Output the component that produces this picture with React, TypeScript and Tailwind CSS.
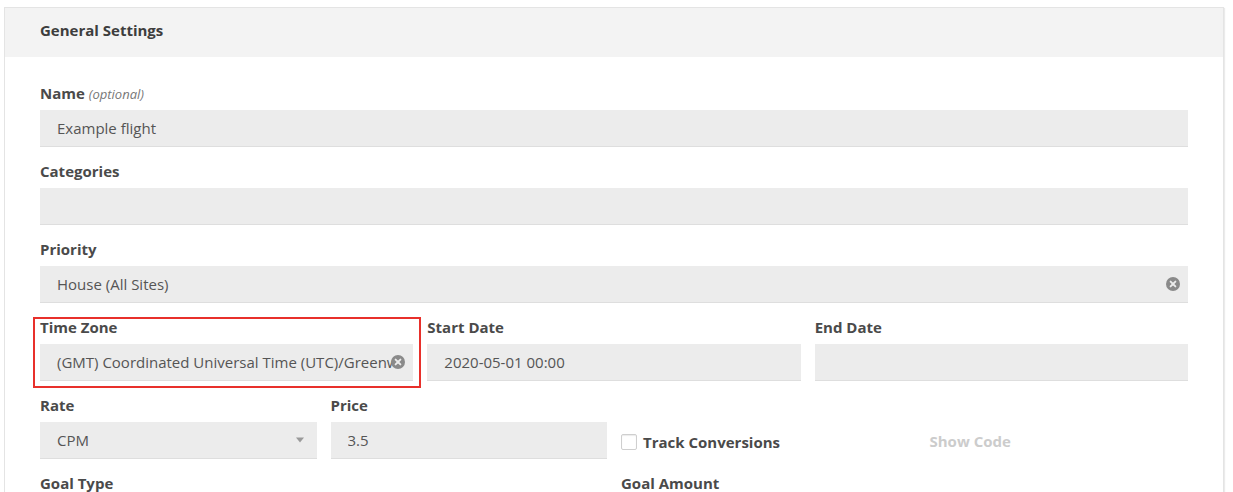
import React from "react";

const ClearIcon = () => (
  <svg width="14" height="14" viewBox="0 0 14 14" className="shrink-0">
    <circle cx="7" cy="7" r="7" fill="#8a8a8a" />
    <path d="M4.6 4.6 L9.4 9.4 M9.4 4.6 L4.6 9.4" stroke="#ececec" strokeWidth="1.9" strokeLinecap="round" />
  </svg>
);

const Label = ({ children }: { children: React.ReactNode }) => (
  <div className="h-5 leading-[18px] text-[15px] font-bold text-[#4a4a4a] mb-[6px] whitespace-nowrap">{children}</div>
);

const Input = ({ value, clear, caret }: { value?: string; clear?: boolean; caret?: boolean }) => (
  <div className="relative flex items-center h-[37px] bg-[#ececec] border-b border-[#dedede] pl-[17px] pr-[20px] text-[15px] text-[#555]">
    <span className="flex-1 overflow-hidden whitespace-nowrap">{value}</span>
    {clear && (
      <span className="absolute right-[8px] top-1/2 -translate-y-1/2 flex">
        <ClearIcon />
      </span>
    )}
    {caret && (
      <span className="absolute right-[13px] top-1/2 -translate-y-1/2 w-0 h-0 border-l-[4px] border-r-[4px] border-t-[5px] border-l-transparent border-r-transparent border-t-[#9a9a9a]" />
    )}
  </div>
);

export default function App() {
  return (
    <div className="bg-white min-h-[492px] font-['Open_Sans',sans-serif] pt-[7px] pl-[4px]">
      <div className="w-[1220px] border border-[#e4e4e4] shadow-[1px_1px_1px_rgba(0,0,0,0.08)] bg-white">
        <div className="h-[49px] bg-[#f3f3f3] pl-[35px] pt-[12px]">
          <div className="text-[15px] leading-5 font-bold text-[#3d3d3d]">General Settings</div>
        </div>
        <div className="px-[35px] pt-[27px] pb-[20px] flex flex-col gap-[15px]">
          <div>
            <Label>
              Name <span className="italic font-normal text-[13px] text-[#777]">(optional)</span>
            </Label>
            <Input value="Example flight" />
          </div>
          <div>
            <Label>Categories</Label>
            <Input />
          </div>
          <div>
            <Label>Priority</Label>
            <Input value="House (All Sites)" clear />
          </div>
          <div className="grid grid-cols-3 gap-[14px]">
            <div className="relative">
              <div className="absolute -left-[7px] -top-[1px] -right-[8px] -bottom-[7px] border-2 border-[#e8302b] pointer-events-none" />
              <Label>Time Zone</Label>
              <Input value="(GMT) Coordinated Universal Time (UTC)/Greenwich Mean Time" clear />
            </div>
            <div>
              <Label>Start Date</Label>
              <Input value="2020-05-01 00:00" />
            </div>
            <div>
              <Label>End Date</Label>
              <Input />
            </div>
          </div>
          <div className="grid grid-cols-4 gap-[14px]">
            <div>
              <Label>Rate</Label>
              <Input value="CPM" caret />
            </div>
            <div>
              <Label>Price</Label>
              <Input value="3.5" />
            </div>
            <div className="pt-[26px]">
              <div className="h-[37px] flex items-center gap-[6px] pt-[3px]">
                <span className="w-[16px] h-[16px] bg-white border border-[#cfcfcf] rounded-[2px] shadow-[inset_0_1px_1px_rgba(0,0,0,0.08)]" />
                <span className="text-[15px] font-bold text-[#4a4a4a]">Track Conversions</span>
              </div>
            </div>
            <div className="pt-[26px]">
              <div className="h-[37px] flex items-center pl-[18px] pt-[1px]">
                <span className="text-[15px] font-bold text-[#cccccc]">Show Code</span>
              </div>
            </div>
          </div>
          <div className="grid grid-cols-2 gap-[14px]">
            <div>
              <Label>Goal Type</Label>
              <Input />
            </div>
            <div>
              <Label>Goal Amount</Label>
              <Input />
            </div>
          </div>
        </div>
      </div>
    </div>
  );
}
